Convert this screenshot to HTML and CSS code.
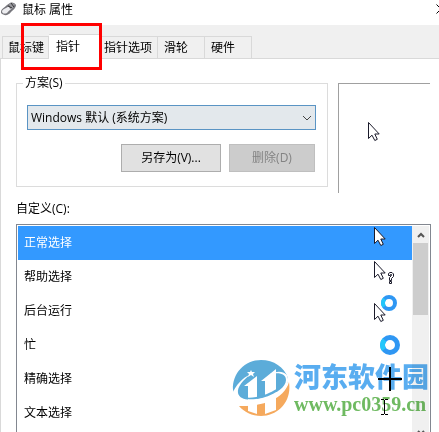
FILE: index.html
```html
<!DOCTYPE html>
<html lang="zh-CN">

<head>
  <meta charset="UTF-8" />
  <meta name="viewport" content="width=device-width, initial-scale=1.0" />
  <title>鼠标 属性</title>
  <link rel="stylesheet" href="styles.css">
</head>

<body>
  <!-- shared pointer shape -->
  <svg class="defs" width="0" height="0" aria-hidden="true">
    <symbol id="arrow" viewBox="0 0 14 21">
      <path d="M1.5 1.5V17.5L5 14.2L7.8 19.5L10.3 18.3L7.8 13H12.2Z" fill="#fff" stroke="#1a1a2a" />
    </symbol>
    <symbol id="ring" viewBox="0 0 20 20">
      <circle cx="10" cy="10" r="7.5" fill="#fff" stroke="#2f97f3" stroke-width="5" />
      <path d="M4 14.5A7.5 7.5 0 0 1 4.5 5" fill="none" stroke="#22c7fb" stroke-width="5" />
    </symbol>
  </svg>

  <header class="titlebar">
    <svg class="mouse-icon" width="18" height="16" viewBox="0 0 18 16">
      <path d="M1 10C1 7 4 6 7 3L10 1C12 0 15 1 16 3C16 6 13 8 11 10C8 14 4 14 1 11Z" fill="#77777d" />
      <path d="M2 9C4 6 7 6 9 4L10 7L13 5C11 8 9 8 7 11C5 12 2 12 2 9Z" fill="#ededf0" />
      <path d="M9 2L11 1L15 2L13 6L10 5Z" fill="#99999f" />
      <path d="M11 1L14 5M8 4L12 6" stroke="#333" fill="none" />
    </svg>
    <h1>鼠标 属性</h1>
    <button class="close" aria-label="关闭">
      <svg width="10" height="10" viewBox="0 0 10 10"><path d="M0.5 0.5L9.5 9.5M9.5 0.5L0.5 9.5" stroke="#000" /></svg>
    </button>
  </header>

  <nav class="tabs" role="tablist">
    <button class="tab tab-keys" role="tab">鼠标键</button>
    <button class="tab active" role="tab" aria-selected="true">指针<span class="mark"></span></button>
    <button class="tab tab-options" role="tab">指针选项</button>
    <button class="tab" role="tab">滑轮</button>
    <button class="tab" role="tab">硬件</button>
  </nav>

  <main class="panel">
    <div class="top">
      <fieldset class="scheme">
        <legend><label for="scheme">方案(S)</label></legend>
        <div class="select">
          <select id="scheme">
            <option>Windows 默认 (系统方案)</option>
          </select>
          <svg class="chevron" width="10" height="6" viewBox="0 0 10 6"><path d="M1 1L5 5L9 1" fill="none" stroke="#444" /></svg>
        </div>
        <div class="actions">
          <button class="btn save">另存为(V)...</button>
          <button class="btn" disabled>删除(D)</button>
        </div>
      </fieldset>
      <div class="preview">
        <svg width="14" height="21"><use href="#arrow" /></svg>
      </div>
    </div>

    <p class="list-label" id="custom">自定义(C):</p>

    <div class="list">
      <ul role="listbox" aria-labelledby="custom">
        <li class="selected" role="option" aria-selected="true">正常选择
          <svg width="40" height="34"><use href="#arrow" x="1" y="0" width="14" height="21" /></svg>
        </li>
        <li role="option">帮助选择
          <svg width="40" height="34">
            <use href="#arrow" x="1" y="0" width="14" height="21" />
            <path d="M16.5 15.5V13.5L18 12.5H20L21.5 14V16.5L19.5 18.5V20.5H17.5V17.5L19.5 15.5V14.5H18.5V15.5ZM17.5 21.5H19.5V23.5H17.5Z" fill="#fff" stroke="#1a1a2a" />
          </svg>
        </li>
        <li role="option">后台运行
          <svg width="40" height="34">
            <use href="#ring" x="9" y="1" width="16" height="16" />
            <use href="#arrow" x="1" y="8" width="14" height="21" />
          </svg>
        </li>
        <li role="option">忙
          <svg width="40" height="34"><use href="#ring" x="8" y="7" width="20" height="20" /></svg>
        </li>
        <li role="option">精确选择
          <svg width="40" height="34"><path d="M6 17H30M18 5V29" stroke="#000" stroke-width="2" /></svg>
        </li>
        <li role="option">文本选择
          <svg width="40" height="34"><path d="M9 3.5H12M13 3.5H16M12.5 4V18M9 18.5H12M13 18.5H16" stroke="#000" /></svg>
        </li>
      </ul>
      <div class="scrollbar">
        <button aria-label="向上"><svg width="8" height="6" viewBox="0 0 8 6"><path d="M1 5L4 2L7 5" fill="none" stroke="#555" stroke-width="2" /></svg></button>
        <div class="thumb"></div>
        <button class="down" aria-label="向下"><svg width="8" height="6" viewBox="0 0 8 6"><path d="M1 1L4 4L7 1" fill="none" stroke="#555" stroke-width="2" /></svg></button>
      </div>

      <div class="watermark">
        <svg width="58" height="58" viewBox="0 0 58 58">
          <path d="M1 30C0 13 13 0 29 0C42 0 52 7 56 18C56 30 44 38 28 41C14 44 3 41 1 30Z" fill="#3f9dd3" />
          <path d="M57 22C60 42 46 56 29 56C20 56 12 52 7 46C25 47 52 41 57 22Z" fill="#f49a40" />
          <path d="M12 26L25 16V54L16 51V26Z" fill="#fff" />
          <path d="M29 21L44 9V50L33 54V21Z" fill="#fff" />
          <path d="M0 34C4 25 10 18 19 14C11 20 5 27 6 33C8 41 20 41 32 37C45 33 54 27 54 20C54 14 48 12 38 14C49 9 57 13 56 21C55 31 43 39 30 43C14 48 1 46 0 34Z" fill="#fff" />
          <path d="M8 35C13 39 22 38 32 35C40 32 45 29 48 26L46 31C40 35 32 38 24 39C17 40 10 39 8 35Z" fill="#3f9dd3" />
          <path d="M19 10L20 12H23L21 14L22 17L19 15L16 17L17 14L15 12H18Z" fill="#fff" />
        </svg>
        <div>
          <p class="site">河东软件园</p>
          <p class="url">www.pc0359.cn</p>
        </div>
      </div>
    </div>
  </main>
</body>

</html>
```
FILE: styles.css
```css
* {
  box-sizing: border-box;
}

body {
  margin: 0;
  height: 100vh;
  overflow: hidden;
  background-color: #fff;
  color: #000;
  font: 12px/16px "Open Sans", "Noto Sans CJK SC", sans-serif;
}

button,
select {
  font: inherit;
  color: inherit;
}

h1,
p,
ul {
  margin: 0;
  padding: 0;
}

svg {
  display: block;
}

.defs {
  position: absolute;
}

.titlebar {
  display: flex;
  height: 25px;
  padding-top: 2px;
}

.titlebar h1 {
  margin-left: 4px;
  font-size: 12px;
  font-weight: normal;
}

.close {
  margin: 2px -7px 0 auto;
  padding: 0;
  height: 10px;
  border: none;
  background: none;
}

.tabs {
  display: flex;
  align-items: flex-end;
  height: 34px;
  padding-left: 2px;
  background-color: #f0f0f0;
  border-bottom: 1px solid #d9d9d9;
}

.tab {
  height: 22px;
  width: 47px;
  padding: 0 0 0 6px;
  text-align: left;
  white-space: nowrap;
  background-color: #f0f0f0;
  border: 1px solid #d9d9d9;
  border-width: 1px 1px 0 0;
}

.tab-keys {
  border-left-width: 1px;
  padding-left: 5px;
}

.tab.active {
  position: relative;
  width: 53px;
  height: 25px;
  margin-bottom: -1px;
  padding-left: 7px;
  background-color: #fff;
}

.tab-options {
  width: 56px;
  padding-left: 2px;
}

/* red frame round the current tab */
.mark {
  position: absolute;
  left: -28px;
  top: -12px;
  width: 81px;
  height: 47px;
  border: 3px solid #f00;
}

.panel {
  padding: 16px 8px 0 15px;
  border-left: 1px solid #d9d9d9;
}

.top {
  display: flex;
  align-items: flex-start;
  gap: 10px;
  padding-right: 1px;
}

.scheme {
  flex: 1;
  min-width: 0;
  margin: 0;
  padding: 14px 11px 14px 10px;
  border: 1px solid #dcdcdc;
}

.scheme legend {
  height: 16px;
  margin-left: -4px;
  padding: 0 2px;
}

.select {
  position: relative;
}

.select select {
  display: block;
  width: 100%;
  height: 25px;
  padding: 0 20px 0 3px;
  appearance: none;
  background-color: #e3e8ec;
  border: 1px solid #5a94c4;
  border-radius: 0;
}

.chevron {
  position: absolute;
  right: 4px;
  top: 10px;
}

.actions {
  display: flex;
  justify-content: flex-end;
  gap: 8px;
  margin-top: 14px;
  padding-right: 1px;
}

.btn {
  width: 86px;
  height: 28px;
  padding: 0;
  background-color: #e1e1e1;
  border: 1px solid #adadad;
}

.btn.save {
  width: 100px;
}

.btn:disabled {
  background-color: #ccc;
  border-color: #bfbfbf;
  color: #838383;
}

.preview {
  width: 92px;
  height: 110px;
  margin-top: 8px;
  padding: 37px 0 0 28px;
  border: 1px solid #a0a0a0;
  border-width: 1px 0 0 1px;
}

.list-label {
  margin: 8px 0 7px;
}

.list {
  position: relative;
  display: flex;
  padding: 1px;
  border: 1px solid #828790;
}

.list ul {
  flex: 1;
  padding-bottom: 11px;
  list-style: none;
}

.list li {
  display: flex;
  align-items: center;
  justify-content: space-between;
  height: 34px;
  padding-left: 6px;
}

.list li.selected {
  background-color: #3399ff;
  color: #fff;
}

.scrollbar {
  display: flex;
  flex-direction: column;
  width: 17px;
  padding: 0 1px;
  background-color: #f0f0f0;
}

.scrollbar button {
  display: flex;
  align-items: center;
  justify-content: center;
  height: 17px;
  padding: 0;
  border: none;
  background: none;
}

.scrollbar .down {
  margin-top: auto;
}

.thumb {
  height: 72px;
  background-color: #cdcdcd;
}

.watermark {
  position: absolute;
  right: 1px;
  top: 135px;
  display: flex;
  gap: 4px;
  opacity: 0.85;
  mix-blend-mode: multiply;
}

.site {
  font-family: "Noto Sans CJK SC", sans-serif;
  font-size: 27px;
  line-height: 32px;
  font-weight: 900;
  color: #3c9fee;
}

.url {
  font-family: "Liberation Serif", serif;
  font-size: 20px;
  line-height: 24px;
  font-weight: bold;
  color: #55ae45;
}
```
